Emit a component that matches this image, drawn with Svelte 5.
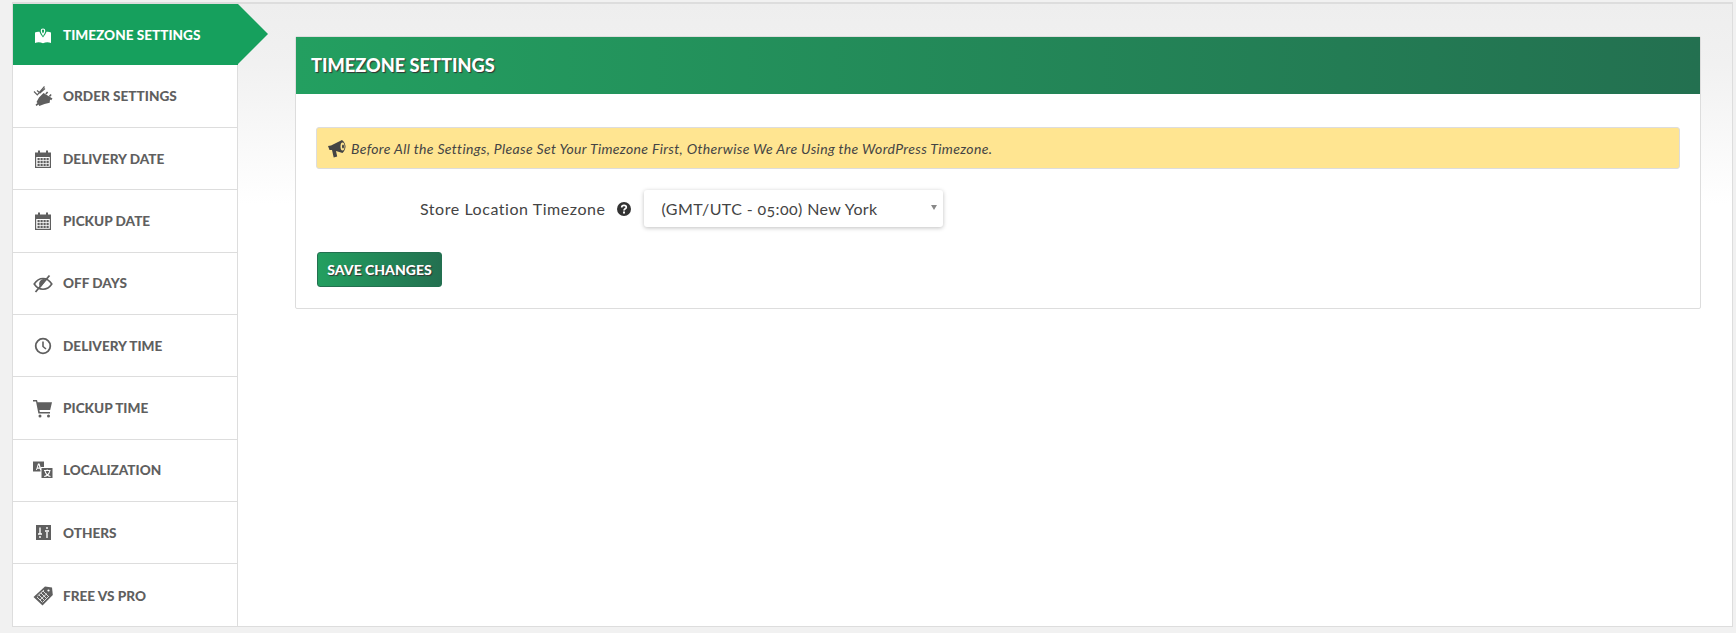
<script>
  const items = [
    { key: 'map', label: 'Timezone Settings', active: true },
    { key: 'plug', label: 'Order Settings' },
    { key: 'cal', label: 'Delivery Date' },
    { key: 'cal', label: 'Pickup Date' },
    { key: 'eye', label: 'Off Days' },
    { key: 'clock', label: 'Delivery Time' },
    { key: 'cart', label: 'Pickup Time' },
    { key: 'lang', label: 'Localization' },
    { key: 'sliders', label: 'Others' },
    { key: 'tag', label: 'Free vs Pro' }
  ];
</script>

{#snippet icon(key)}
  <svg class="ico" viewBox="0 0 20 20" width="20" height="20" aria-hidden="true">
    {#if key === 'map'}
      <path fill="currentColor" d="M2 7.500c1.500-.8 3-1 4.500-.7.6 1.700 1.700 3.400 3.500 5.700 1.800-2.300 2.900-4 3.500-5.700 1.500-.3 3-.1 4.500.7v10.500c-2.500-1-5-1-8 .2-3-1.200-5.500-1.200-8-.2z"/>
      <path fill="none" stroke="currentColor" stroke-width="1.200" d="M10 9.800c-1.100-1.700-1.700-2.900-1.700-4.100a1.700 1.700 0 0 1 3.400 0c0 1.200-.6 2.400-1.700 4.100z"/>
    {:else if key === 'plug'}
      <path fill="currentColor" d="M10.500 7l9 5.500-1.300 1.700-1.200-.7-.3 3.300-5.200 1.200-5.200 2-.8-1.500-2 1.500-1-1.200 2-1.700-1-1 2.500-4.500z"/>
      <path fill="currentColor" d="M14 5.500l1.200 1-1.700 2-1.200-1zM17.500 8l1.200 1-1.700 2-1.200-1z"/>
      <path fill="none" stroke="currentColor" stroke-width="1.200" d="M1 5.500l3.300 3.300L11.500.5M4 4.500l3 2.500 5-4.500"/>
    {:else if key === 'cal'}
      <path fill="currentColor" fill-rule="evenodd" d="M2 3.500h16V19H2zM3.200 8v9.800h13.600V8z"/>
      <path fill="currentColor" d="M5 1.500h2v3.500H5zM13 1.500h2v3.500h-2z"/>
      <path fill="currentColor" d="M4.500 9h2.200v2.200H4.500zM7.500 9h2.200v2.200H7.500zM10.500 9h2.200v2.200h-2.200zM13.500 9h2.200v2.200h-2.200zM4.500 12h2.200v2.200H4.500zM7.500 12h2.200v2.200H7.500zM10.500 12h2.200v2.200h-2.200zM13.500 12h2.200v2.200h-2.200zM4.500 15h2.200v2H4.500zM7.500 15h2.200v2H7.500zM10.500 15h2.200v2h-2.200zM13.500 15h2.200v2h-2.200z"/>
    {:else if key === 'eye'}
      <path fill="none" stroke="currentColor" stroke-width="1.600" d="M1.200 11c2.500-3.800 5.300-5.500 8.800-5.500s6.300 1.700 8.800 5.500c-2.500 3.800-5.300 5.200-8.800 5.200S3.700 14.800 1.200 11z"/>
      <path fill="currentColor" d="M6.500 9c1-2 2.500-3 4-3l3 .5-6 8c-1.300-1.500-1.800-3.500-1-5.500z"/>
      <path fill="none" stroke="currentColor" stroke-width="1.800" d="M2.500 19L16.500 2.500"/>
    {:else if key === 'clock'}
      <circle cx="10" cy="10" r="7.300" fill="none" stroke="currentColor" stroke-width="1.800"/>
      <path fill="none" stroke="currentColor" stroke-width="1.600" d="M10 5.500V10.500L13 13"/>
    {:else if key === 'cart'}
      <path fill="currentColor" d="M0 2h4l.6 2.300H19l-1.800 7.700H6.400l.4 2H17v1.600H5.400L3 3.600H0z"/>
      <circle cx="7" cy="18" r="1.500" fill="currentColor"/><circle cx="15.500" cy="18" r="1.500" fill="currentColor"/>
    {:else if key === 'lang'}
      <path fill="currentColor" d="M0 1.500h11v10H0z"/>
      <path fill="#fff" d="M3 10l2-6.500h1.500l2 6.500H7L6.800 8.800H4.300L4 10zM4.700 7.500h1.700L5.600 5z"/>
      <path fill="currentColor" stroke="#fff" stroke-width="1" d="M8 7.500h12v11H8z"/>
      <path fill="none" stroke="#fff" stroke-width="1.100" d="M11 10.500h6.500M14.200 9.500v1M12 11c.8 3 3 5 5.500 5.500M16.800 11c-.8 3-2.800 5-5.600 5.500"/>
    {:else if key === 'sliders'}
      <path fill="currentColor" d="M3 2h15v15H3z"/>
      <path fill="none" stroke="#fff" stroke-width="1.400" d="M7 4.500v6M5 11h4M7 13v2M14 15V9M12 8h4M14 6V4"/>
    {:else if key === 'tag'}
      <path fill="currentColor" d="M0.500 11L12 .5l7 1 .8 7.500L9.500 19.500z"/>
      <path fill="none" stroke="#fff" stroke-width=".8" d="M4 11l5 5M6 9l5 5M8 7l5 5M10 5l5 5M4.500 10L11 4M7 14l7-6.500M9.500 16.500L16 10"/>
      <circle cx="15.500" cy="4.500" r="1.100" fill="#fff"/>
    {/if}
  </svg>
{/snippet}

<div class="frame">
  <nav class="side">
    {#each items as it}
      <a class="item" class:active={it.active} href="#top">
        {@render icon(it.key)}
        <span>{it.label}</span>
      </a>
    {/each}
  </nav>
  <main class="main">
    <section class="panel">
      <h2 class="head">Timezone Settings</h2>
      <div class="body">
        <p class="notice">
          <svg class="horn" viewBox="0 0 20 20" width="20" height="20" aria-hidden="true">
            <path fill="currentColor" d="M0 8l3-.5L14 2c2.500 2 3.500 4.500 3.500 6.500S16.500 13 14.500 15L8 13l1.200 5.500-3.500 1L4 12H1.500z"/>
            <ellipse cx="14.500" cy="8.500" rx="2" ry="4" fill="#ffe591"/>
            <ellipse cx="15" cy="8.500" rx="1" ry="2" fill="currentColor"/>
          </svg>
          <em>Before All the Settings, Please Set Your Timezone First, Otherwise We Are Using the WordPress Timezone.</em>
        </p>
        <div class="row">
          <label class="lbl" for="tz">Store Location Timezone</label>
          <svg class="help" viewBox="0 0 14 14" width="14" height="14" aria-hidden="true">
            <circle cx="7" cy="7" r="7" fill="currentColor"/>
            <path fill="none" stroke="#fff" stroke-width="1.700" d="M4.700 5.400c0-1.400 1-2.100 2.300-2.100s2.300.7 2.300 1.900c0 1.600-2.300 1.600-2.300 3.300"/>
            <rect x="6" y="9.500" width="2" height="2" fill="#fff"/>
          </svg>
          <div class="select" id="tz"><span>(GMT/UTC - 05:00) New York</span><i></i></div>
        </div>
        <button class="save">Save Changes</button>
      </div>
    </section>
  </main>
</div>

<style>
  :global(body) { margin: 0; background: #f1f1f1; }
  .frame {
    display: flex;
    box-sizing: border-box;
    height: 625px;
    margin: 2px 3px 0 12px;
    border: 1px solid #ddd;
    border-top-width: 2px;
    background: #fff;
    font-family: "Lato", sans-serif;
  }
  .side {
    flex: 0 0 225px;
    box-sizing: border-box;
    border-right: 1px solid #ddd;
    background: #fff;
  }
  .item {
    position: relative;
    display: flex;
    align-items: center;
    gap: 10px;
    box-sizing: border-box;
    height: 62.35px;
    padding-left: 20px;
    border-bottom: 1px solid #ddd;
    color: #5f5f5f;
    font-size: 13.600px;
    font-weight: 900;
    text-transform: uppercase;
    text-decoration: none;
  }
  .item:nth-child(2) { height: 63px; }
  .item:last-child { border-bottom: 0; }
  .item.active {
    height: 61px;
    margin-right: -1px;
    border-bottom: 0;
    background: #16a05d;
    color: #fff;
  }
  .item.active::after {
    content: "";
    position: absolute;
    top: 0;
    left: 100%;
    border-style: solid;
    border-width: 30.500px 0 30.500px 30px;
    border-color: transparent transparent transparent #16a05d;
  }
  .ico { flex: none; }
  .main {
    flex: 1;
    padding: 32px 31px 0 57px;
    background: linear-gradient(#eeeeee 0, #f1f1f1 60px, #ffffff 200px);
  }
  .panel {
    border: 1px solid #ddd;
    border-radius: 2px;
    background: #fff;
    color: #444;
  }
  .head {
    margin: 0;
    height: 57px;
    line-height: 57px;
    padding-left: 15px;
    background: linear-gradient(90deg, #239f60, #237050);
    color: #fff;
    font-size: 18.200px;
    font-weight: 900;
    text-transform: uppercase;
    text-shadow: 1px 1px 1px #333;
  }
  .body { padding: 33px 20px 21px; }
  .notice {
    display: flex;
    align-items: center;
    gap: 3px;
    box-sizing: border-box;
    height: 42px;
    margin: 0;
    padding-left: 11px;
    border: 1px solid #ddd;
    border-radius: 3px;
    background: #ffe591;
    color: #444;
    font-size: 14px;
    letter-spacing: .34px;
  }
  .row {
    display: flex;
    align-items: center;
    height: 37px;
    margin-top: 21px;
    padding-left: 104px;
  }
  .lbl { font-size: 16px; letter-spacing: .55px; }
  .help { margin: 0 13px 0 11px; color: #333; }
  .select {
    position: relative;
    display: flex;
    align-items: center;
    box-sizing: border-box;
    width: 299px;
    height: 37px;
    padding-left: 18px;
    border-radius: 3px;
    background: #fff;
    box-shadow: 0 1px 4px rgba(0,0,0,.25);
    font-size: 16px;
    letter-spacing: .39px;
    font-variant-numeric: oldstyle-nums;
  }
  .select i {
    position: absolute;
    right: 6px;
    top: 15px;
    border-style: solid;
    border-width: 5px 3.500px 0;
    border-color: #888 transparent transparent;
  }
  .save {
    display: block;
    width: 125px;
    height: 35px;
    margin: 25px 0 0 1px;
    padding: 0;
    border: 1px solid #237050;
    border-radius: 3px;
    background: linear-gradient(90deg, #239f60, #237050);
    color: #fff;
    font-family: inherit;
    font-size: 14px;
    font-weight: 900;
    text-transform: uppercase;
    text-shadow: 1px 1px 1px #333;
  }
</style>
